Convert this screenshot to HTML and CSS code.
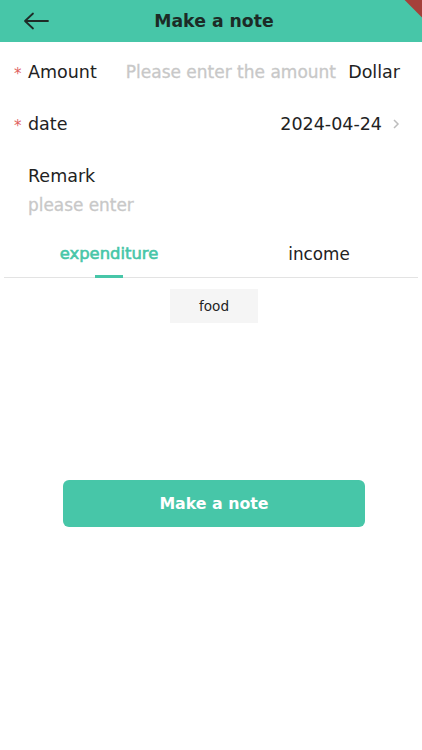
FILE: index.html
```html
<!DOCTYPE html>
<html lang="en">
<head>
    <meta charset="UTF-8">
    <meta name="viewport" content="width=device-width, initial-scale=1.0">
    <title>Make a note</title>
    <link rel="stylesheet" href="styles.css">
</head>
<body>
    <div class="app">
        <header class="topbar">
            <span class="back">
                <svg width="26" height="18" viewBox="0 0 26 18">
                    <path d="M25 9H2M10 1.5L2 9l8 7.5" fill="none" stroke="#1e2b27" stroke-width="1.8" stroke-linecap="round" stroke-linejoin="round"/>
                </svg>
            </span>
            <h1>Make a note</h1>
            <span class="debug"></span>
        </header>

        <div class="form">
            <div class="row">
                <span class="req">*</span>
                <span class="label">Amount</span>
                <span class="placeholder amount-input">Please enter the amount</span>
                <span class="unit">Dollar</span>
            </div>
            <div class="row">
                <span class="req">*</span>
                <span class="label">date</span>
                <span class="value">2024-04-24</span>
                <span class="chevron">
                    <svg width="8" height="12" viewBox="0 0 8 12">
                        <path d="M2 2l4 4-4 4" fill="none" stroke="#bdbdbd" stroke-width="1.5"/>
                    </svg>
                </span>
            </div>
            <div class="remark">
                <div class="label">Remark</div>
                <div class="placeholder">please enter</div>
            </div>
        </div>

        <div class="tabs">
            <div class="tab active">expenditure</div>
            <div class="tab">income</div>
        </div>

        <div class="chips">
            <span class="chip">food</span>
        </div>

        <div class="actions">
            <button type="button" class="submit">Make a note</button>
        </div>
    </div>
</body>
</html>
```

FILE: styles.css
```css
* {
    box-sizing: border-box;
}
body {
    margin: 0;
    background: #fff;
    font-family: "DejaVu Sans", Verdana, sans-serif;
    color: #222;
}
.app {
    width: 422px;
    min-height: 750px;
    overflow: hidden;
}
.topbar {
    position: relative;
    height: 42px;
    background: #47c6a8;
    display: flex;
    align-items: center;
    justify-content: center;
    padding-left: 6px;
}
.topbar h1 {
    margin: 0;
    font-size: 17.3px;
    font-weight: bold;
    color: #1c2b26;
}
.back {
    position: absolute;
    left: 23px;
    top: 12px;
    display: flex;
}
.debug {
    position: absolute;
    right: -28px;
    top: -16px;
    width: 60px;
    height: 26px;
    background: #a5403a;
    transform: rotate(45deg);
}
.form {
    padding: 0 22px 0 14px;
}
.row {
    display: flex;
    align-items: center;
    height: 52px;
    font-size: 17.5px;
    white-space: nowrap;
}
.row > span {
    flex-shrink: 0;
}
.row:first-child {
    margin-top: 4px;
}
.req {
    color: #e0625f;
    font-size: 15px;
    width: 14px;
    padding-top: 4px;
}
.label {
    color: #222;
    font-size: 17.5px;
}
.placeholder {
    color: #c8c8c8;
    -webkit-text-stroke: 0.3px #c8c8c8;
}
.amount-input {
    margin-left: 29px;
    font-size: 17px;
}
.unit {
    margin-left: auto;
}
.value {
    margin-left: auto;
}
.chevron {
    margin-left: 10px;
    display: flex;
}
.remark {
    padding: 16px 0 0 14px;
}
.remark .placeholder {
    font-size: 16.9px;
    margin-top: 9px;
}
.tabs {
    display: flex;
    margin: 15px 4px 0 4px;
    border-bottom: 1px solid #e3e3e3;
}
.tab {
    flex: 1;
    height: 47px;
    display: flex;
    align-items: center;
    justify-content: center;
    font-size: 16.8px;
    color: #222;
    position: relative;
    padding-left: 6px;
}
.tab.active {
    flex: none;
    width: 210px;
    padding-left: 0;
    color: #47c6a8;
    -webkit-text-stroke: 0.6px #47c6a8;
    font-size: 16.4px;
}
.tab.active::after {
    content: "";
    position: absolute;
    bottom: -1px;
    left: 50%;
    width: 28px;
    margin-left: -14px;
    height: 3px;
    background: #47c6a8;
}
.chips {
    display: flex;
    justify-content: center;
    padding-top: 11px;
}
.chip {
    width: 88px;
    height: 34px;
    background: #f5f5f5;
    display: flex;
    align-items: center;
    justify-content: center;
    font-size: 13.6px;
    color: #222;
    margin-left: 6px;
}
.actions {
    padding: 157px 57px 0 63px;
}
.submit {
    width: 302px;
    height: 47px;
    border: none;
    border-radius: 6px;
    background: #47c6a8;
    color: #fff;
    font-family: inherit;
    font-size: 15.8px;
    font-weight: bold;
}
```
